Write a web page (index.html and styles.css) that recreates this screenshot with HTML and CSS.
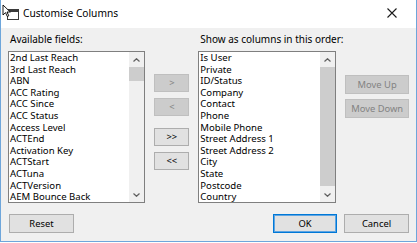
FILE: index.html
```html
<!DOCTYPE html>
<html>
<head>
<meta charset="utf-8">
<title>Customise Columns</title>
<link rel="stylesheet" href="styles.css">
</head>
<body>
<div class="window">
  <div class="titlebar">
    <svg class="appicon" width="18" height="18" viewBox="0 0 18 18">
      <rect x="5.5" y="5.5" width="11" height="10" fill="#fff" stroke="#3a3a3a"/>
      <rect x="6" y="6" width="10" height="2" fill="#3a3a3a"/>
      <path d="M1 1 L1 11 L3.5 8.6 L5.3 12.5 L6.8 11.8 L5 8 L8.3 8 Z" fill="#fff" stroke="#000" stroke-width="0.9" stroke-linejoin="round"/>
    </svg>
    <span class="title">Customise Columns</span>
    <svg class="close" width="10" height="10" viewBox="0 0 10 10">
      <path d="M0.5 0.5 L9.5 9.5 M9.5 0.5 L0.5 9.5" stroke="#1a1a1a" stroke-width="1.1"/>
    </svg>
  </div>
  <div class="content">
    <div class="main">
      <div class="panel">
        <div class="label">Available fields:</div>
        <div class="listbox">
          <ul class="items">
            <li>2nd Last Reach</li>
            <li>3rd Last Reach</li>
            <li>ABN</li>
            <li>ACC Rating</li>
            <li>ACC Since</li>
            <li>ACC Status</li>
            <li>Access Level</li>
            <li>ACTEnd</li>
            <li>Activation Key</li>
            <li>ACTStart</li>
            <li>ACTuna</li>
            <li>ACTVersion</li>
            <li>AEM Bounce Back</li>
          </ul>
          <div class="scrollbar">
            <div class="sb-btn"><svg width="7" height="4" viewBox="0 0 7 4"><path d="M0.5 3.5 L3.5 0.7 L6.5 3.5" fill="none" stroke="#606060" stroke-width="1.2"/></svg></div>
            <div class="sb-track"><div class="sb-thumb thumb-small"></div></div>
            <div class="sb-btn"><svg width="7" height="4" viewBox="0 0 7 4"><path d="M0.5 0.5 L3.5 3.3 L6.5 0.5" fill="none" stroke="#606060" stroke-width="1.2"/></svg></div>
          </div>
        </div>
      </div>
      <div class="mid-buttons">
        <button class="btn disabled">&gt;</button>
        <button class="btn disabled">&lt;</button>
        <button class="btn group2">&gt;&gt;</button>
        <button class="btn">&lt;&lt;</button>
      </div>
      <div class="panel">
        <div class="label">Show as columns in this order:</div>
        <div class="listbox">
          <ul class="items">
            <li>Is User</li>
            <li>Private</li>
            <li>ID/Status</li>
            <li>Company</li>
            <li>Contact</li>
            <li>Phone</li>
            <li>Mobile Phone</li>
            <li>Street Address 1</li>
            <li>Street Address 2</li>
            <li>City</li>
            <li>State</li>
            <li>Postcode</li>
            <li>Country</li>
          </ul>
          <div class="scrollbar">
            <div class="sb-btn"><svg width="7" height="4" viewBox="0 0 7 4"><path d="M0.5 3.5 L3.5 0.7 L6.5 3.5" fill="none" stroke="#606060" stroke-width="1.2"/></svg></div>
            <div class="sb-track"><div class="sb-thumb thumb-full"></div></div>
            <div class="sb-btn"><svg width="7" height="4" viewBox="0 0 7 4"><path d="M0.5 0.5 L3.5 3.3 L6.5 0.5" fill="none" stroke="#606060" stroke-width="1.2"/></svg></div>
          </div>
        </div>
      </div>
      <div class="side-buttons">
        <button class="btn wide disabled">Move Up</button>
        <button class="btn wide disabled">Move Down</button>
      </div>
    </div>
    <div class="footer">
      <button class="btn foot">Reset</button>
      <div class="foot-right">
        <button class="btn foot default">OK</button>
        <button class="btn foot">Cancel</button>
      </div>
    </div>
  </div>
</div>
</body>
</html>
```

FILE: styles.css
```css
html, body {
  margin: 0;
  padding: 0;
  background: #ffffff;
}

body {
  font-family: "Noto Sans", "DejaVu Sans", sans-serif;
  font-size: 9.6px;
  color: #000;
}

.window {
  width: 417px;
  height: 242px;
  box-sizing: border-box;
  border-left: 1px solid #6ea6db;
  border-right: 1px solid #6ea6db;
  border-bottom: 1px solid #6ea6db;
  display: flex;
  flex-direction: column;
}

.titlebar {
  height: 28px;
  flex: none;
  background: #ffffff;
  display: flex;
  align-items: center;
}

.appicon {
  margin-left: 1px;
  margin-top: -2px;
}

.title {
  margin-left: 3px;
  font-size: 10.2px;
  color: #000;
  margin-top: -2px;
}

.close {
  margin-left: auto;
  margin-right: 19px;
  margin-top: -2px;
}

.content {
  flex: 1;
  background: #f0f0f0;
  padding: 5px 7px 0 7px;
  display: flex;
  flex-direction: column;
}

.main {
  display: flex;
  align-items: flex-start;
}

.panel {
  width: 138px;
  display: flex;
  flex-direction: column;
}

.label {
  height: 12px;
  line-height: 12px;
  font-size: 10px;
  margin-left: 2px;
  margin-bottom: 6px;
  white-space: nowrap;
}

.listbox {
  height: 152px;
  box-sizing: border-box;
  border: 1px solid #7f7f7f;
  background: #ffffff;
  display: flex;
}

.items {
  list-style: none;
  margin: 0;
  padding: 0 0 0 1px;
  flex: 1;
  overflow: hidden;
}

.items li {
  height: 11.6px;
  line-height: 11.6px;
  white-space: nowrap;
}

.scrollbar {
  width: 15px;
  background: #f0f0f0;
  display: flex;
  flex-direction: column;
}

.sb-btn {
  height: 15px;
  display: flex;
  align-items: center;
  justify-content: center;
}

.sb-track {
  flex: 1;
  display: flex;
  flex-direction: column;
}

.sb-thumb {
  background: #cdcdcd;
}

.thumb-small {
  height: 14px;
}

.thumb-full {
  flex: 1;
  margin-bottom: 1px;
}

.mid-buttons {
  width: 35px;
  margin-left: 9px;
  margin-right: 9px;
  padding-top: 41px;
  display: flex;
  flex-direction: column;
  gap: 6px;
}

.mid-buttons .group2 {
  margin-top: 6px;
}

.side-buttons {
  width: 64px;
  margin-left: 9px;
  padding-top: 42px;
  display: flex;
  flex-direction: column;
  gap: 5px;
}

.btn {
  font-family: "Noto Sans", "DejaVu Sans", sans-serif;
  font-size: 9.4px;
  height: 18px;
  padding: 0;
  margin: 0;
  box-sizing: border-box;
  background: #e1e1e1;
  border: 1px solid #adadad;
  color: #000;
  line-height: 16px;
}

.btn.wide {
  height: 19px;
}

.btn.disabled {
  background: #cccccc;
  border-color: #bfbfbf;
  color: #838383;
}

.footer {
  margin-top: 11px;
  display: flex;
  justify-content: space-between;
  padding-left: 1px;
}

.foot-right {
  display: flex;
  gap: 7px;
}

.btn.foot {
  width: 65px;
  height: 19px;
}

.btn.default {
  border: 1px solid #0078d7;
  box-shadow: inset 0 0 0 1px #5fa5e2;
  width: 64px;
}
```
